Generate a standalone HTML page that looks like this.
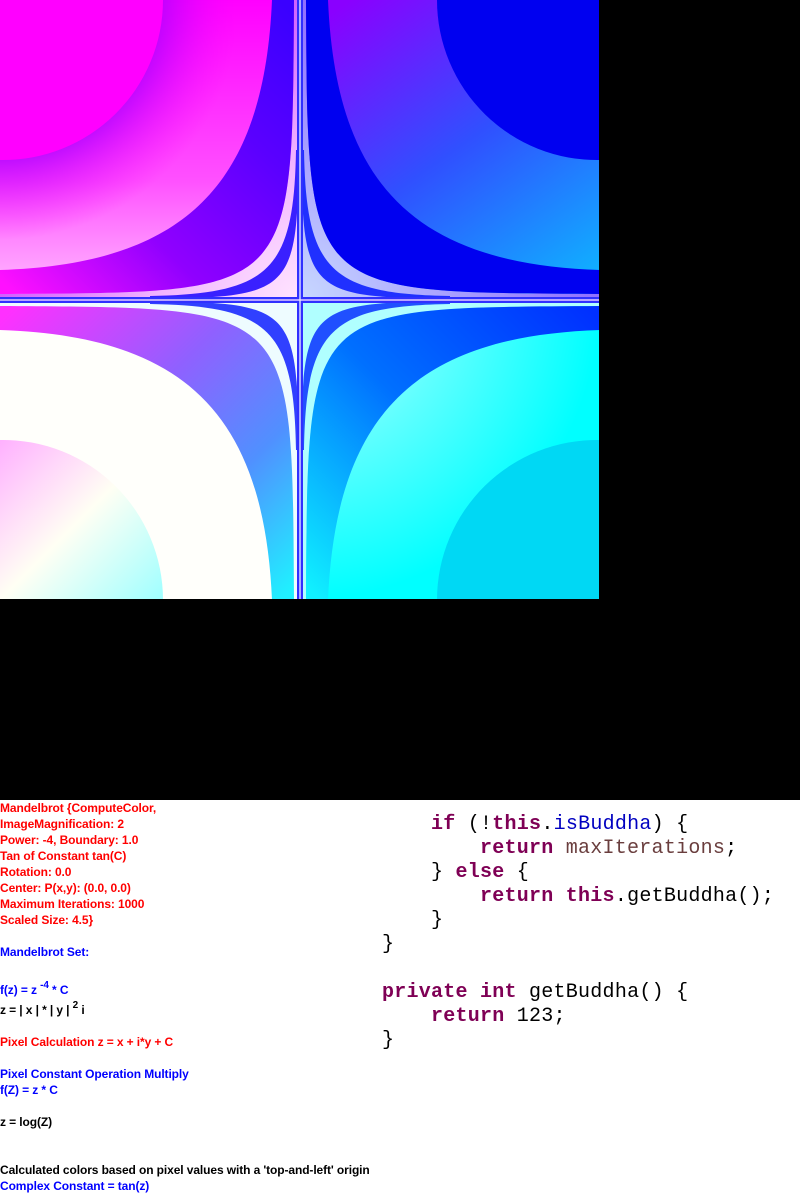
<!DOCTYPE html>
<html><head><meta charset="utf-8"><style>
html,body{margin:0;padding:0;}
body{width:800px;height:1194px;background:#fff;position:relative;overflow:hidden;}
#blk{position:absolute;left:0;top:0;width:800px;height:800px;background:#000;}
svg{position:absolute;left:0;top:0;}
.t{position:absolute;left:0;font:bold 12px "Liberation Sans",Arial,sans-serif;white-space:pre;line-height:14px;letter-spacing:-0.1px;}
.r{color:#ff0000}.b{color:#0000ff}.k{color:#000}
sup{font-size:10px;vertical-align:0;position:relative;top:-6px;}
.c{position:absolute;left:382px;font:20px "Liberation Mono",monospace;white-space:pre;line-height:24px;color:#000;letter-spacing:0.25px;}
.kw{color:#7f0055;font-weight:bold}.fd{color:#0000c0}.lv{color:#6a3e3e}
</style></head><body>
<div id="blk"></div>
<svg width="600" height="600" viewBox="0 0 600 600">
<defs>
<linearGradient id="tlBase" gradientUnits="userSpaceOnUse" x1="0" y1="0" x2="0" y2="300"><stop offset="0" stop-color="#ff00ff"/><stop offset="0.6" stop-color="#ff50ff"/><stop offset="1" stop-color="#ffc0ff"/></linearGradient>
<radialGradient id="tlRing" gradientUnits="userSpaceOnUse" cx="0" cy="0" r="300"><stop offset="0.53" stop-color="#b000ff" stop-opacity="0.8"/><stop offset="0.8" stop-color="#ff00ff" stop-opacity="0"/></radialGradient>
<linearGradient id="tlBand" gradientUnits="userSpaceOnUse" x1="0" y1="280" x2="280" y2="0"><stop offset="0" stop-color="#ff10ff"/><stop offset="0.35" stop-color="#9000ff"/><stop offset="0.7" stop-color="#5a00ff"/><stop offset="1" stop-color="#3a00ff"/></linearGradient>
<radialGradient id="tlIn" gradientUnits="userSpaceOnUse" cx="300" cy="300" r="300"><stop offset="0" stop-color="#ffe4ff"/><stop offset="0.5" stop-color="#f0b0ff"/><stop offset="1" stop-color="#d060ff"/></radialGradient>
<linearGradient id="trBase" gradientUnits="userSpaceOnUse" x1="250" y1="0" x2="40" y2="300"><stop offset="0" stop-color="#8a00ff"/><stop offset="0.5" stop-color="#3050ff"/><stop offset="1" stop-color="#10b0ff"/></linearGradient>
<radialGradient id="trIn" gradientUnits="userSpaceOnUse" cx="300" cy="300" r="300"><stop offset="0" stop-color="#c8d8ff"/><stop offset="0.5" stop-color="#a8a0ff"/><stop offset="1" stop-color="#9070ff"/></radialGradient>
<linearGradient id="blCorner" gradientUnits="userSpaceOnUse" x1="0" y1="160" x2="160" y2="0"><stop offset="0" stop-color="#ffb0ff"/><stop offset="0.5" stop-color="#fffff4"/><stop offset="1" stop-color="#a0ffff"/></linearGradient>
<linearGradient id="blBand" gradientUnits="userSpaceOnUse" x1="0" y1="280" x2="280" y2="0"><stop offset="0" stop-color="#ff30ff"/><stop offset="0.4" stop-color="#9060ff"/><stop offset="0.7" stop-color="#5090ff"/><stop offset="1" stop-color="#20f0ff"/></linearGradient>
<radialGradient id="brBase" gradientUnits="userSpaceOnUse" cx="300" cy="300" r="300"><stop offset="0" stop-color="#d0ffff"/><stop offset="0.5" stop-color="#60ffff"/><stop offset="1" stop-color="#00ffff"/></radialGradient>
<linearGradient id="brBand" gradientUnits="userSpaceOnUse" x1="0" y1="280" x2="280" y2="0"><stop offset="0" stop-color="#0030ff"/><stop offset="0.5" stop-color="#0070ff"/><stop offset="1" stop-color="#10f0ff"/></linearGradient>
<path id="band" d="M0,270 C185,264 264,185 272,0 L294,0 C292,298 298,292 0,294 Z"/>
<path id="inner" d="M0,294 C298,292 292,298 294,0 L300,0 L300,300 L0,300 Z"/>
<path id="sband" d="M150,296 C270,294 294,270 296,150 L298.5,150 C298,292 292,298 150,298.5 Z"/>
</defs>
<g>
<rect width="300" height="300" fill="url(#tlBase)"/>
<rect width="300" height="300" fill="url(#tlRing)"/>
<path d="M0,0 L163,0 A160,160 0 0 1 0,160 Z" fill="#ff00ff"/>
<use href="#inner" fill="url(#tlIn)"/>
<use href="#band" fill="url(#tlBand)"/>
<use href="#sband" fill="#3a20ff"/>
</g>
<g transform="matrix(-1 0 0 1 600 0)">
<rect width="300" height="300" fill="url(#trBase)"/>
<path d="M0,0 L163,0 A160,160 0 0 1 0,160 Z" fill="#0000f0"/>
<use href="#inner" fill="url(#trIn)"/>
<use href="#band" fill="#0000f0"/>
<use href="#sband" fill="#2030ff"/>
</g>
<g transform="matrix(1 0 0 -1 0 600)">
<rect width="300" height="300" fill="#fffffb"/>
<path d="M0,0 L163,0 A160,160 0 0 1 0,160 Z" fill="url(#blCorner)"/>
<use href="#inner" fill="#eefcff"/>
<use href="#band" fill="url(#blBand)"/>
<use href="#sband" fill="#3040ff"/>
</g>
<g transform="matrix(-1 0 0 -1 600 600)">
<rect width="300" height="300" fill="url(#brBase)"/>
<path d="M0,0 L163,0 A160,160 0 0 1 0,160 Z" fill="#00d8f4"/>
<use href="#inner" fill="#b0ffff"/>
<use href="#band" fill="url(#brBand)"/>
<use href="#sband" fill="#2050ff"/>
</g>
<rect x="0" y="297" width="600" height="6" fill="#3030ff"/>
<rect x="297" y="0" width="6" height="600" fill="#3030ff"/>
<rect x="0" y="299.3" width="600" height="1.4" fill="#f0d8ff"/>
<rect x="299.3" y="0" width="1.4" height="600" fill="#e0e8ff"/>
<rect x="599" y="0" width="1" height="600" fill="#000"/>
<rect x="0" y="599" width="600" height="1" fill="#000"/>
</svg>

<div class="t r" style="top:801px">Mandelbrot {ComputeColor,</div>
<div class="t r" style="top:817px">ImageMagnification: 2</div>
<div class="t r" style="top:833px">Power: -4, Boundary: 1.0</div>
<div class="t r" style="top:849px">Tan of Constant tan(C)</div>
<div class="t r" style="top:865px">Rotation: 0.0</div>
<div class="t r" style="top:881px">Center: P(x,y): (0.0, 0.0)</div>
<div class="t r" style="top:897px">Maximum Iterations: 1000</div>
<div class="t r" style="top:913px">Scaled Size: 4.5}</div>
<div class="t b" style="top:945px">Mandelbrot Set:</div>
<div class="t b" style="top:983px">f(z) = z <sup>-4</sup> * C</div>
<div class="t k" style="top:1003px">z = | x | * | y | <sup>2</sup> i</div>
<div class="t r" style="top:1035px">Pixel Calculation z = x + i*y + C</div>
<div class="t b" style="top:1067px">Pixel Constant Operation Multiply</div>
<div class="t b" style="top:1083px">f(Z) = z * C</div>
<div class="t k" style="top:1115px">z = log(Z)</div>
<div class="t k" style="top:1163px">Calculated colors based on pixel values with a 'top-and-left' origin</div>
<div class="t b" style="top:1179px">Complex Constant = tan(z)</div>

<div class="c" style="top:813px">    <span class="kw">if</span> (!<span class="kw">this</span>.<span class="fd">isBuddha</span>) {
        <span class="kw">return</span> <span class="lv">maxIterations</span>;
    } <span class="kw">else</span> {
        <span class="kw">return</span> <span class="kw">this</span>.getBuddha();
    }
}

<span class="kw">private</span> <span class="kw">int</span> getBuddha() {
    <span class="kw">return</span> 123;
}</div>
</body></html>
